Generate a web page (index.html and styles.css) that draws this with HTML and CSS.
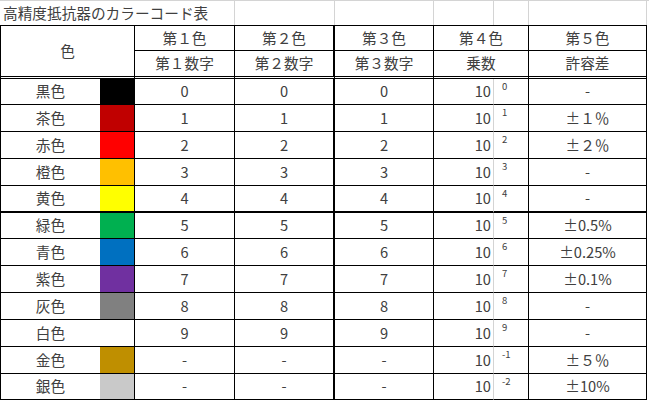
FILE: index.html
```html
<!DOCTYPE html>
<html lang="ja">
<head>
<meta charset="utf-8">
<title>高精度抵抗器のカラーコード表</title>
<link rel="stylesheet" href="styles.css">
</head>
<body>
<div class="title-row">
  <div class="tcell title">高精度抵抗器のカラーコード表</div>
  <div class="tcell"></div>
  <div class="tcell"></div>
  <div class="tcell"></div>
  <div class="tcell"></div>
  <div class="tcell"></div>
</div>
<div class="sheet">
  <div class="c h-color">色</div>
  <div class="c h1 bc">第１色</div>
  <div class="c h1 bd">第２色</div>
  <div class="c h1 be">第３色</div>
  <div class="c h1 bf">第４色</div>
  <div class="c h1 bh">第５色</div>
  <div class="c h2 bc">第１数字</div>
  <div class="c h2 bd">第２数字</div>
  <div class="c h2 be">第３数字</div>
  <div class="c h2 bf">乗数</div>
  <div class="c h2 bh">許容差</div>

  <div class="c name">黒色</div><div class="c sw" style="background:#000000"></div><div class="c num">0</div><div class="c num d">0</div><div class="c num">0</div><div class="c ten">10</div><div class="c exp">0</div><div class="c tol">-</div>
  <div class="c name">茶色</div><div class="c sw" style="background:#c00000"></div><div class="c num">1</div><div class="c num d">1</div><div class="c num">1</div><div class="c ten">10</div><div class="c exp">1</div><div class="c tol">±１％</div>
  <div class="c name">赤色</div><div class="c sw" style="background:#ff0000"></div><div class="c num">2</div><div class="c num d">2</div><div class="c num">2</div><div class="c ten">10</div><div class="c exp">2</div><div class="c tol">±２％</div>
  <div class="c name">橙色</div><div class="c sw" style="background:#ffc000"></div><div class="c num">3</div><div class="c num d">3</div><div class="c num">3</div><div class="c ten">10</div><div class="c exp">3</div><div class="c tol">-</div>
  <div class="c name thick">黄色</div><div class="c sw thick" style="background:#ffff00"></div><div class="c num thick">4</div><div class="c num d thick">4</div><div class="c num thick">4</div><div class="c ten thick">10</div><div class="c exp thick">4</div><div class="c tol thick">-</div>
  <div class="c name">緑色</div><div class="c sw" style="background:#00b050"></div><div class="c num">5</div><div class="c num d">5</div><div class="c num">5</div><div class="c ten">10</div><div class="c exp">5</div><div class="c tol">±0.5%</div>
  <div class="c name">青色</div><div class="c sw" style="background:#0070c0"></div><div class="c num">6</div><div class="c num d">6</div><div class="c num">6</div><div class="c ten">10</div><div class="c exp">6</div><div class="c tol">±0.25%</div>
  <div class="c name">紫色</div><div class="c sw" style="background:#7030a0"></div><div class="c num">7</div><div class="c num d">7</div><div class="c num">7</div><div class="c ten">10</div><div class="c exp">7</div><div class="c tol">±0.1%</div>
  <div class="c name">灰色</div><div class="c sw" style="background:#808080"></div><div class="c num">8</div><div class="c num d">8</div><div class="c num">8</div><div class="c ten">10</div><div class="c exp">8</div><div class="c tol">-</div>
  <div class="c name">白色</div><div class="c sw" style="background:#ffffff"></div><div class="c num">9</div><div class="c num d">9</div><div class="c num">9</div><div class="c ten">10</div><div class="c exp">9</div><div class="c tol">-</div>
  <div class="c name">金色</div><div class="c sw" style="background:#bf8f00"></div><div class="c num">-</div><div class="c num d">-</div><div class="c num">-</div><div class="c ten">10</div><div class="c exp">-1</div><div class="c tol">±５％</div>
  <div class="c name">銀色</div><div class="c sw" style="background:#c9c9c9"></div><div class="c num">-</div><div class="c num d">-</div><div class="c num">-</div><div class="c ten">10</div><div class="c exp">-2</div><div class="c tol">±10%</div>
</div>
</body>
</html>
```

FILE: styles.css
```css
html, body {
  margin: 0;
  padding: 0;
  background: #ffffff;
}

body {
  font-family: "Noto Sans CJK JP", "Noto Sans", sans-serif;
  font-size: 14.67px;
  color: #404040;
  line-height: 1;
}

.title-row {
  display: grid;
  grid-template-columns: 235px 100px 99px 60px 35px 118px;
  height: 25px;
  box-sizing: border-box;
  border-top: 1px solid #d4d4d4;
}

.tcell {
  box-sizing: border-box;
  border-right: 1px solid #d4d4d4;
}

.title {
  display: flex;
  align-items: center;
  padding-left: 3px;
  white-space: nowrap;
}

.sheet {
  display: grid;
  grid-template-columns: 99px 35px 100px 100px 99px 60px 35px 118px;
  grid-template-rows: 25px 28px 26px 27px 27px 27px 27px 26px 27px 27px 27px 27px 27px 26px;
  width: 647px;
  box-sizing: border-box;
  border-left: 1px solid #000;
  border-top: 1px solid #000;
}

.c {
  box-sizing: border-box;
  display: flex;
  align-items: center;
  justify-content: center;
  border-bottom: 1px solid #000;
  white-space: nowrap;
}

.h-color {
  grid-column: 1 / 3;
  grid-row: 1 / 3;
  border-right: 1px solid #000;
  border-bottom: 3px double #000;
}

.h1.bf, .h2.bf {
  grid-column: 6 / 8;
}

.h2 {
  border-bottom: 3px double #000;
}

.bc, .be, .bf, .bh {
  border-right: 1px solid #000;
}

.bd {
  border-right: 2px solid #000;
}

.sw {
  border-right: 1px solid #000;
}

.num {
  border-right: 1px solid #000;
}

.num.d {
  border-right: 2px solid #000;
}

.ten {
  justify-content: flex-end;
  padding-right: 2px;
  border-right: 1px solid #d4d4d4;
}

.exp {
  font-size: 9.5px;
  align-items: flex-start;
  justify-content: flex-start;
  padding-top: 3px;
  padding-left: 8px;
  border-right: 1px solid #000;
}

.tol {
  border-right: 1px solid #000;
}

.thick {
  border-bottom: 2px solid #000;
}
```
